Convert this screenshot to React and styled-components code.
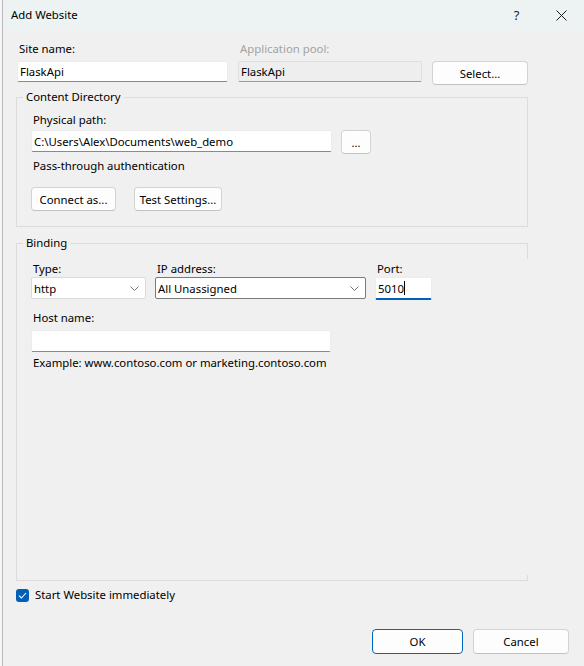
import React from 'react';
import styled, { createGlobalStyle } from 'styled-components';

const Global = createGlobalStyle`
  html, body { margin: 0; padding: 0; background: #f0f0f0; }
  body {
    font-family: "Segoe UI", "Noto Sans", "Open Sans", sans-serif;
    font-size: 11.35px;
    color: #000;
  }
  * { box-sizing: border-box; }
`;

const Screen = styled.div`
  width: 584px;
  height: 666px;
  display: flex;
  overflow: hidden;
`;

const BehindStrip = styled.div`
  flex: none;
  width: 2px;
  background: #f6f6f6;
`;

const Dialog = styled.div`
  flex: 1;
  min-width: 0;
  display: flex;
  flex-direction: column;
  background: #f0f0f0;
  border-left: 1px solid #b8b8b8;
`;

const TitleBar = styled.div`
  flex: none;
  height: 30px;
  display: flex;
  align-items: center;
  background: #edf3f3;
  padding-left: 8px;
`;

const Title = styled.div`
  flex: 1;
  line-height: 16px;
`;

const TitleButton = styled.div`
  width: 45px;
  height: 30px;
  display: flex;
  align-items: center;
  justify-content: center;
  font-size: 13px;
  color: #1a1a1a;
`;

const Body = styled.div`
  flex: 1;
  display: flex;
  flex-direction: column;
  padding: 11px 15px 12px 13px;
  min-height: 0;
`;

const Main = styled.div`
  flex: 1;
  display: flex;
  flex-direction: column;
  margin-right: 41px;
  min-height: 0;
`;

const TopGrid = styled.div`
  display: grid;
  grid-template-columns: 211px 184px 96px;
  grid-template-rows: 16px 24px;
  column-gap: 10px;
  row-gap: 4px;
  align-items: start;
  padding-left: 1px;
`;

const Label = styled.div`
  line-height: 16px;
  padding-left: 2px;
  color: ${(p) => (p.$disabled ? '#a3a3a3' : '#000')};
  white-space: nowrap;
`;

const TextBox = styled.div`
  height: ${(p) => p.$h || 21}px;
  width: ${(p) => (p.$w ? `${p.$w}px` : 'auto')};
  display: flex;
  align-items: center;
  padding-left: ${(p) => p.$pad || 2}px;
  background: ${(p) => (p.$disabled ? '#eeeeee' : '#ffffff')};
  border: 1px solid ${(p) => (p.$disabled ? '#dedede' : '#ececec')};
  border-bottom: ${(p) =>
    p.$focused ? '2px solid #005fb8' : `1px solid ${p.$disabled ? '#9a9a9a' : '#8a8a8a'}`};
  border-radius: 2px;
  white-space: nowrap;
  overflow: hidden;
`;

const Caret = styled.span`
  display: inline-block;
  width: 1px;
  height: 14px;
  background: #000;
`;

const Button = styled.button`
  height: ${(p) => p.$h || 24}px;
  width: ${(p) => p.$w}px;
  padding: 0;
  font: inherit;
  color: #000;
  background: #fdfdfd;
  border: 1px solid ${(p) => (p.$primary ? '#0067c0' : '#d3d3d3')};
  border-bottom-color: ${(p) => (p.$primary ? '#0067c0' : '#c2c2c2')};
  border-radius: 4px;
  flex: none;
`;

const Group = styled.div`
  margin-top: ${(p) => p.$mt}px;
  border: 1px solid #dcdcdc;
  padding: 0 14px 15px 14px;
  display: flex;
  flex-direction: column;
  ${(p) =>
    p.$grow &&
    `
    flex: 1;
    border-right: 0;
    background:
      linear-gradient(#dcdcdc, #dcdcdc) right top / 1px 15px no-repeat,
      linear-gradient(#dcdcdc, #dcdcdc) right bottom / 1px 5px no-repeat;
  `}
`;

const Legend = styled.div`
  width: fit-content;
  margin: -9px 0 0 -8px;
  padding: 0 3px;
  line-height: 16px;
  background: #f0f0f0;
`;

const Stack = styled.div`
  display: flex;
  flex-direction: column;
  margin-top: ${(p) => p.$mt || 0}px;
  gap: ${(p) => p.$gap || 0}px;
`;

const Row = styled.div`
  display: flex;
  align-items: flex-start;
  gap: ${(p) => p.$gap}px;
  margin-top: ${(p) => p.$mt || 0}px;
`;

const Text = styled.div`
  line-height: 16px;
  padding-left: 2px;
  margin-top: ${(p) => p.$mt || 0}px;
  white-space: nowrap;
`;

const BindingGrid = styled.div`
  display: grid;
  grid-template-columns: 115px 211px 57px;
  grid-template-rows: 16px 23px;
  column-gap: 9px;
  align-items: start;
  margin-top: 10px;
`;

const SelectBox = styled.div`
  height: 22px;
  display: flex;
  align-items: center;
  justify-content: space-between;
  padding: 0 6px 0 2px;
  background: #fff;
  border: 1px solid ${(p) => (p.$active ? '#7a7a7a' : '#dadada')};
  border-radius: 2px;
  white-space: nowrap;
`;

const Chevron = () => (
  <svg width="9" height="5" viewBox="0 0 9 5">
    <polyline points="0.5,0.5 4.5,4.5 8.5,0.5" fill="none" stroke="#707070" strokeWidth="1" />
  </svg>
);

const CheckRow = styled.div`
  display: flex;
  align-items: center;
  gap: 6px;
  margin-top: 6px;
  line-height: 16px;
`;

const CheckBox = styled.div`
  width: 13px;
  height: 13px;
  border-radius: 3px;
  background: #005fb8;
  display: flex;
  align-items: center;
  justify-content: center;
`;

const Footer = styled.div`
  flex: none;
  display: flex;
  justify-content: flex-end;
  gap: 10px;
  margin-top: 26px;
`;

export default function App() {
  return (
    <>
      <Global />
      <Screen>
        <BehindStrip />
        <Dialog>
          <TitleBar>
            <Title>Add Website</Title>
            <TitleButton>?</TitleButton>
            <TitleButton>
              <svg width="11" height="11" viewBox="0 0 11 11">
                <path d="M0.5 0.5 L10.5 10.5 M10.5 0.5 L0.5 10.5" stroke="#1a1a1a" strokeWidth="1" />
              </svg>
            </TitleButton>
          </TitleBar>
          <Body>
            <Main>
              <TopGrid>
                <Label>Site name:</Label>
                <Label $disabled>Application pool:</Label>
                <div />
                <TextBox>FlaskApi</TextBox>
                <TextBox $disabled>FlaskApi</TextBox>
                <Button $w={96}>Select...</Button>
              </TopGrid>

              <Group $mt={12}>
                <Legend>Content Directory</Legend>
                <Stack $mt={7} $gap={2}>
                  <Label>Physical path:</Label>
                  <Row $gap={9}>
                    <TextBox $w={301} $h={22}>C:\Users\Alex\Documents\web_demo</TextBox>
                    <Button $w={30}>...</Button>
                  </Row>
                </Stack>
                <Text $mt={4}>Pass-through authentication</Text>
                <Row $gap={18} $mt={13}>
                  <Button $w={85}>Connect as...</Button>
                  <Button $w={88}>Test Settings...</Button>
                </Row>
              </Group>

              <Group $mt={16} $grow>
                <Legend>Binding</Legend>
                <BindingGrid>
                  <Label>Type:</Label>
                  <Label>IP address:</Label>
                  <Label>Port:</Label>
                  <SelectBox>
                    <span>http</span>
                    <Chevron />
                  </SelectBox>
                  <SelectBox $active>
                    <span>All Unassigned</span>
                    <Chevron />
                  </SelectBox>
                  <TextBox $h={23} $focused $pad={2}>
                    5010<Caret />
                  </TextBox>
                </BindingGrid>
                <Stack $mt={10} $gap={4}>
                  <Label>Host name:</Label>
                  <TextBox $w={300} $h={22} />
                </Stack>
                <Text $mt={3}>Example: www.contoso.com or marketing.contoso.com</Text>
              </Group>

              <CheckRow>
                <CheckBox>
                  <svg width="9" height="7" viewBox="0 0 9 7">
                    <polyline points="1,3.6 3.4,6 8,1" fill="none" stroke="#ffffff" strokeWidth="1.1" />
                  </svg>
                </CheckBox>
                <span>Start Website immediately</span>
              </CheckRow>
            </Main>
            <Footer>
              <Button $w={91} $h={25} $primary>OK</Button>
              <Button $w={96} $h={25}>Cancel</Button>
            </Footer>
          </Body>
        </Dialog>
      </Screen>
    </>
  );
}
